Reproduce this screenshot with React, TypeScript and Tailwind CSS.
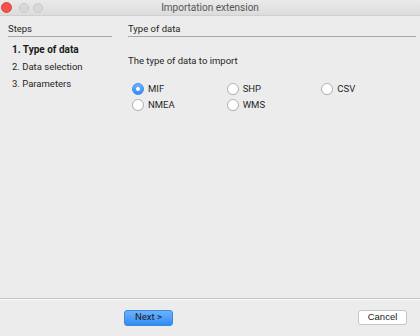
import React from "react";

const steps = ["1. Type of data", "2. Data selection", "3. Parameters"];

const options = [
  { label: "MIF", checked: true },
  { label: "SHP" },
  { label: "CSV" },
  { label: "NMEA" },
  { label: "WMS" },
];

const Radio: React.FC<{ label: string; checked?: boolean }> = ({ label, checked }) => (
  <div className="flex items-center gap-[4px] h-[15px]">
    {checked ? (
      <span className="w-[12px] h-[12px] rounded-full bg-gradient-to-b from-[#6db4fb] to-[#2c8bf6] border border-[#3f8fe8] flex items-center justify-center">
        <span className="w-[4px] h-[4px] rounded-full bg-white" />
      </span>
    ) : (
      <span className="w-[12px] h-[12px] rounded-full bg-white border border-[#b4b4b4] shadow-[0_0.5px_0.5px_rgba(0,0,0,0.08)]" />
    )}
    <span className="text-[9.5px] text-[#262626]">{label}</span>
  </div>
);

export default function App() {
  return (
    <div className="w-[420px] h-[336px] bg-[#ececec] flex flex-col font-['Roboto',sans-serif] text-[#262626] overflow-hidden">
      {/* title bar */}
      <div className="relative h-[16px] bg-gradient-to-b from-[#eaeaea] to-[#dcdcdc] border-b border-[#cfcfcf] flex items-center justify-center">
        <div className="absolute left-[1px] top-[2px] flex items-center">
          <span className="w-[11px] h-[11px] rounded-full bg-[#f2524c] border border-[#e0443e]" />
          <span className="ml-[7px] w-[10px] h-[10px] rounded-full bg-[#d8d8d8] border border-[#cacaca]" />
          <span className="ml-[4px] w-[10px] h-[10px] rounded-full bg-[#d8d8d8] border border-[#cacaca]" />
        </div>
        <span className="text-[10px] text-[#555]">Importation extension</span>
      </div>

      <div className="flex-1 flex px-[8px] pt-[7px] gap-[16px]">
        {/* steps */}
        <div className="w-[104px] shrink-0 flex flex-col">
          <div className="text-[9.5px] pb-[1px] border-b border-[#a7a7a7] h-[14px] leading-[12px]">Steps</div>
          <div className="flex flex-col pl-[4px] pt-[6px] gap-[4px]">
            {steps.map((s, i) => (
              <div key={s} className={`h-[13px] leading-[13px] ${i === 0 ? "font-bold text-[10px] text-[#1a1a1a]" : "text-[9.5px]"}`}>
                {s}
              </div>
            ))}
          </div>
        </div>

        {/* content */}
        <div className="flex-1 flex flex-col">
          <div className="text-[9.5px] pb-[1px] border-b border-[#a7a7a7] h-[14px] leading-[12px]">Type of data</div>
          <div className="text-[9.5px] mt-[17px]">The type of data to import</div>
          <div className="grid grid-cols-3 gap-y-[1px] mt-[13px] pl-[4px] w-[288px]">
            {options.map((o) => (
              <Radio key={o.label} label={o.label} checked={o.checked} />
            ))}
          </div>
        </div>
      </div>

      {/* footer */}
      <div className="h-[38px] border-t border-[#c4c4c4] shadow-[inset_0_1px_0_#fafafa] flex items-center pl-[124px] pr-[13px]">
        <button className="w-[49px] h-[16px] rounded-[3px] bg-gradient-to-b from-[#6cb2fb] to-[#2f8cf6] border border-[#3a86e0] text-[9.5px] text-[#1b1b1b] flex items-center justify-center">
          Next &gt;
        </button>
        <button className="ml-auto w-[49px] h-[15px] rounded-[3px] bg-white border border-[#c6c6c6] text-[9.5px] text-[#1b1b1b] flex items-center justify-center font-['Liberation_Sans',sans-serif]">
          Cancel
        </button>
      </div>
    </div>
  );
}
